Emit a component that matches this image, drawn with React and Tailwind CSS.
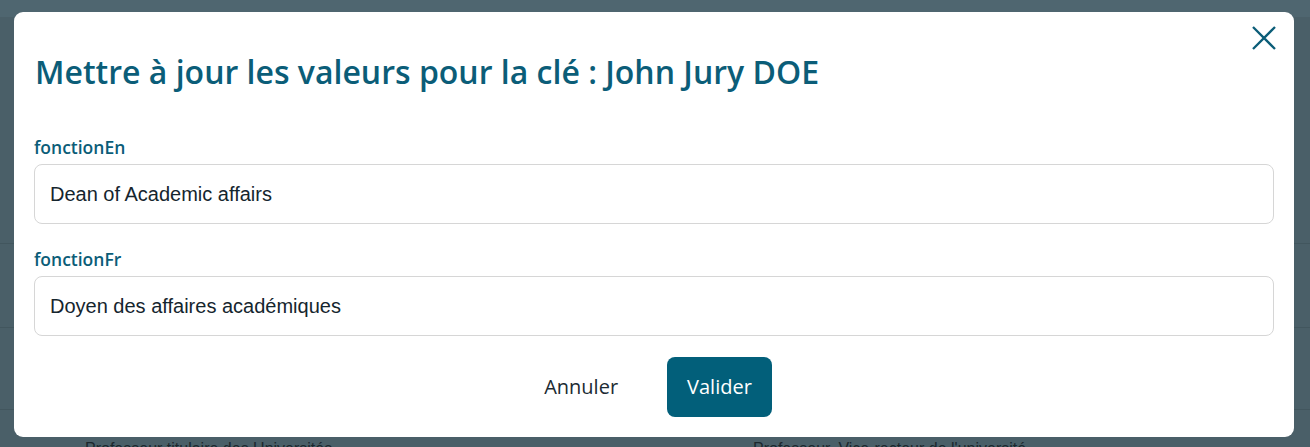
import React, { useState } from 'react';

const FieldInput = ({ label, value, onChange }) => (
  <div className="flex flex-col">
    <label className="text-[17.5px] leading-[24px] font-semibold text-[#0b5d78] mb-[5px]">{label}</label>
    <input
      value={value}
      onChange={(e) => onChange(e.target.value)}
      className="h-[60px] w-full border border-[#d6d6d6] rounded-[8px] pl-[15px] pr-4 text-[20px] text-[#15252e] outline-none font-['Liberation_Sans',Arial,sans-serif]"
    />
  </div>
);

const App = () => {
  const [fonctionEn, setFonctionEn] = useState('Dean of Academic affairs');
  const [fonctionFr, setFonctionFr] = useState('Doyen des affaires académiques');

  return (
    <div className="relative h-[447px] w-full overflow-hidden bg-[#4a5f68] font-['Open_Sans',sans-serif]">
      {/* page behind the overlay */}
      <div className="flex flex-col">
        <div className="h-[17px] bg-[#4f6670]" />
        <div className="h-[227px] border-b border-[#42565e]" />
        <div className="h-[84px] border-b border-[#42565e]" />
        <div className="h-[82px] border-b border-[#42565e]" />
        <div className="flex pt-[27px] text-[16px] leading-[24px] text-[#1b272d] font-['Liberation_Sans',Arial,sans-serif]">
          <span className="w-[753px] pl-[85px]">Professeur titulaire des Universités</span>
          <span>Professeur, Vice-recteur de l'université</span>
        </div>
      </div>

      {/* modal */}
      <div className="absolute left-[14px] right-[16px] top-[12px] bg-white rounded-[9px] px-5 pt-10 pb-5">
        <button className="absolute top-[14px] right-[18px] text-[#0b5d78]">
          <svg width="24" height="24" viewBox="0 0 24 24" fill="none" stroke="currentColor" strokeWidth="2.3">
            <path d="M1 1 L23 23 M23 1 L1 23" />
          </svg>
        </button>

        <h2 className="pl-px text-[32px] leading-[40px] font-semibold text-[#0b5d78]">
          Mettre à jour les valeurs pour la clé : John Jury DOE
        </h2>

        <div className="mt-[43px] flex flex-col gap-[23px]">
          <FieldInput label="fonctionEn" value={fonctionEn} onChange={setFonctionEn} />
          <FieldInput label="fonctionFr" value={fonctionFr} onChange={setFonctionFr} />
        </div>

        <div className="mt-[21px] flex justify-center items-center gap-[41px]">
          <button className="h-[60px] px-2 text-[20px] text-[#1c2b33]">Annuler</button>
          <button className="h-[60px] px-5 rounded-[8px] bg-[#025f7a] text-white text-[20px]">Valider</button>
        </div>
      </div>
    </div>
  );
};

export default App;
